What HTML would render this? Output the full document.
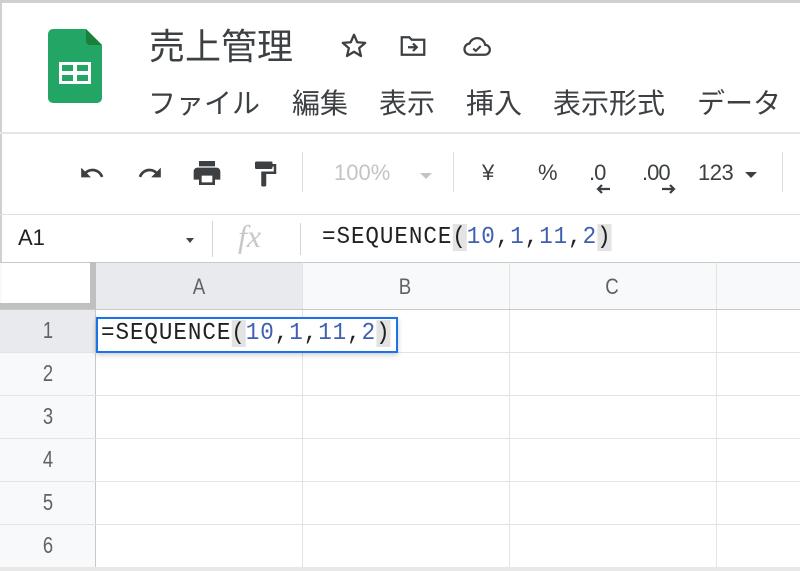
<!DOCTYPE html>
<html><head><meta charset="utf-8"><style>
*{margin:0;padding:0;box-sizing:border-box}
body{width:800px;height:571px;overflow:hidden;background:#fff;position:relative;font-family:"Liberation Sans","Noto Sans CJK JP",sans-serif;color:#3c4043}
.a{position:absolute}
.cj{font-family:"Noto Sans CJK JP",sans-serif;color:#3c4043;white-space:nowrap}
.m{position:absolute;top:82px;font-size:28px;line-height:40px;font-family:"Noto Sans CJK JP",sans-serif;color:#3c4043;white-space:nowrap}
.hl{position:absolute;height:1px;background:#e2e3e3}
.vl{position:absolute;width:1px;background:#e2e3e3}
.n{position:absolute;width:96px;text-align:center;font-size:23px;color:#5f6368;transform:scaleX(.8)}
.ch{position:absolute;top:274px;font-size:22px;color:#5f6368;text-align:center;width:206px;transform:scaleX(.85)}
.mono{font-family:"Liberation Mono",monospace;white-space:nowrap;transform-origin:0 0;transform:scaleX(.94);letter-spacing:1px}
.b{color:#3f5fb0}
.p{background:#e3e3e3}
</style></head><body>
<div class="a" style="left:0;top:0;width:800px;height:3px;background:#d0d0d0"></div>
<div class="a" style="left:0;top:0;width:2px;height:571px;background:#d0d0d0"></div>
<svg class="a" style="left:48px;top:29px" width="54" height="74" viewBox="0 0 54 74"><path d="M5 0H38L54 16V69a5 5 0 0 1-5 5H5a5 5 0 0 1-5-5V5a5 5 0 0 1 5-5z" fill="#23a566"/><path d="M38 0L54 16H42a4 4 0 0 1-4-4z" fill="#188038"/><rect x="11" y="33" width="32" height="22" fill="#fff"/><rect x="14" y="36" width="11" height="6" fill="#23a566"/><rect x="29" y="36" width="11" height="6" fill="#23a566"/><rect x="14" y="46" width="11" height="6" fill="#23a566"/><rect x="29" y="46" width="11" height="6" fill="#23a566"/></svg>
<div class="a cj" style="left:149px;top:21px;font-size:36px;line-height:46px">売上管理</div>
<svg class="a" style="left:338px;top:31px" width="32" height="30" viewBox="0 0 24 24"><path d="M12 3l2.6 6 6.4.5-4.9 4.2 1.5 6.3L12 16.6 6.4 20l1.5-6.3L3 9.5l6.4-.5z" fill="none" stroke="#3c4043" stroke-width="1.8" stroke-linejoin="round"/></svg>
<svg class="a" style="left:397px;top:31px" width="32" height="30" viewBox="0 0 24 24"><path d="M3 5h6l2 2h10v12H3z" fill="none" stroke="#3c4043" stroke-width="1.8"/><path d="M8 13h7m-3-3l3 3-3 3" fill="none" stroke="#3c4043" stroke-width="1.8"/></svg>
<svg class="a" style="left:460px;top:31px" width="34" height="30" viewBox="0 0 24 24"><path d="M7 19h11a4 4 0 0 0 .5-8A6.5 6.5 0 0 0 6 10a4.5 4.5 0 0 0 1 9z" fill="none" stroke="#3c4043" stroke-width="1.8"/><path d="M9 14l2 2 4-4" fill="none" stroke="#3c4043" stroke-width="1.6"/></svg>
<div class="m" style="left:148px">ファイル</div>
<div class="m" style="left:292px">編集</div>
<div class="m" style="left:379px">表示</div>
<div class="m" style="left:466px">挿入</div>
<div class="m" style="left:553px">表示形式</div>
<div class="m" style="left:697px">データ</div>
<div class="a" style="left:0;top:132px;width:800px;height:2px;background:#e5e5e5"></div>
<!-- toolbar -->
<svg class="a" style="left:74px;top:160px" width="36" height="26" viewBox="0 0 24 24"><path d="M12.5 8c-2.6 0-5 1-6.9 2.6L2 7v9h9l-3.6-3.6c1.4-1.2 3.2-1.9 5.1-1.9 3.5 0 6.5 2.3 7.6 5.5l2.4-.8C21 11 17.1 8 12.5 8z" fill="#3c4043"/></svg>
<svg class="a" style="left:132px;top:160px" width="36" height="26" viewBox="0 0 24 24"><path d="M18.4 10.6C16.5 9 14.1 8 11.5 8 6.9 8 3 11 1.6 15.2l2.4.8c1.1-3.2 4.1-5.5 7.6-5.5 1.9 0 3.7.7 5.1 1.9L13 16h9V7z" fill="#3c4043"/></svg>
<svg class="a" style="left:189px;top:157px" width="36" height="32" viewBox="0 0 24 24"><path d="M19 8H5c-1.7 0-3 1.3-3 3v6h4v4h12v-4h4v-6c0-1.7-1.3-3-3-3zm-3 11H8v-5h8zM18 3H6v4h12z" fill="#3c4043"/></svg>
<svg class="a" style="left:250px;top:157px" width="30" height="34" viewBox="0 0 24 24"><path d="M18 4V3c0-.6-.4-1-1-1H5c-.6 0-1 .4-1 1v4c0 .6.4 1 1 1h12c.6 0 1-.4 1-1V6h1v4H9v11c0 .6.4 1 1 1h2c.6 0 1-.4 1-1v-9h8V4z" fill="#3c4043"/></svg>
<div class="vl" style="left:302px;top:152px;height:40px;background:#ddd"></div>
<div class="a" style="left:334px;top:160px;font-size:22px;color:#c4c4c4">100%</div>
<div class="a" style="left:420px;top:173px;width:0;height:0;border-left:6px solid transparent;border-right:6px solid transparent;border-top:6px solid #c4c4c4"></div>
<div class="vl" style="left:453px;top:152px;height:40px;background:#ddd"></div>
<div class="a" style="left:482px;top:160px;font-size:22px;color:#3c4043">¥</div>
<div class="a" style="left:538px;top:160px;font-size:22px;color:#3c4043">%</div>
<div class="a" style="left:589px;top:160px;font-size:22px;color:#3c4043;letter-spacing:-1px">.0</div>
<svg class="a" style="left:596px;top:184px" width="16" height="10" viewBox="0 0 16 10"><path d="M2 5h12M6 1L2 5l4 4" fill="none" stroke="#3c4043" stroke-width="2.2"/></svg>
<div class="a" style="left:642px;top:160px;font-size:22px;color:#3c4043;letter-spacing:-1px">.00</div>
<svg class="a" style="left:660px;top:184px" width="16" height="10" viewBox="0 0 16 10"><path d="M2 5h12M10 1l4 4-4 4" fill="none" stroke="#3c4043" stroke-width="2.2"/></svg>
<div class="a" style="left:698px;top:160px;font-size:22px;color:#3c4043;letter-spacing:-.5px">123</div>
<div class="a" style="left:745px;top:172px;width:0;height:0;border-left:6px solid transparent;border-right:6px solid transparent;border-top:6px solid #3c4043"></div>
<div class="vl" style="left:782px;top:152px;height:40px;background:#ddd"></div>
<!-- formula bar -->
<div class="a" style="left:0;top:214px;width:800px;height:1px;background:#e0e0e0"></div>
<div class="a" style="left:18px;top:225px;font-size:22px;color:#202124">A1</div>
<div class="a" style="left:186px;top:238px;width:0;height:0;border-left:4px solid transparent;border-right:4px solid transparent;border-top:5px solid #444"></div>
<div class="vl" style="left:212px;top:221px;height:36px;background:#d5d5d5"></div>
<div class="a" style="left:238px;top:218px;font-size:32px;font-family:'Liberation Serif',serif;font-style:italic;color:#c8c8c8">fx</div>
<div class="vl" style="left:300px;top:223px;height:32px;background:#d5d5d5"></div>
<div class="a mono" style="left:322px;top:224px;font-size:24px;color:#202124">=SEQUENCE<span class="p">(</span><span class="b">10</span>,<span class="b">1</span>,<span class="b">11</span>,<span class="b">2</span><span class="p">)</span></div>
<!-- grid -->
<div class="a" style="left:0;top:262px;width:800px;height:48px;background:#f8f9fa"></div>
<div class="a" style="left:96px;top:262px;width:206px;height:48px;background:#e8eaed"></div>
<div class="a" style="left:0;top:310px;width:96px;height:42px;background:#e8eaed"></div>
<div class="a" style="left:0;top:352px;width:96px;height:219px;background:#f8f9fa"></div>
<div class="a" style="left:0;top:262px;width:800px;height:1px;background:#c8c8c8"></div>
<div class="a" style="left:90px;top:262px;width:6px;height:48px;background:#c0c0c0"></div>
<div class="a" style="left:0;top:303px;width:96px;height:7px;background:#c0c0c0"></div>
<div class="a" style="left:2px;top:263px;width:88px;height:40px;background:#fff"></div>
<div class="vl" style="left:302px;top:262px;height:309px"></div>
<div class="vl" style="left:509px;top:262px;height:309px"></div>
<div class="vl" style="left:716px;top:262px;height:309px"></div>
<div class="vl" style="left:95px;top:310px;height:261px;background:#c8c8c8"></div>
<div class="hl" style="left:0;top:309px;width:800px;background:#c8c8c8"></div>
<div class="hl" style="left:0;top:352px;width:800px"></div>
<div class="hl" style="left:0;top:395px;width:800px"></div>
<div class="hl" style="left:0;top:438px;width:800px"></div>
<div class="hl" style="left:0;top:481px;width:800px"></div>
<div class="hl" style="left:0;top:524px;width:800px"></div>
<div class="hl" style="left:0;top:567px;width:800px;height:4px;background:#e8e8e8"></div>
<div class="ch" style="left:96px">A</div>
<div class="ch" style="left:302px">B</div>
<div class="ch" style="left:509px">C</div>
<div class="n" style="left:0;top:317px">1</div>
<div class="n" style="left:0;top:360px">2</div>
<div class="n" style="left:0;top:403px">3</div>
<div class="n" style="left:0;top:446px">4</div>
<div class="n" style="left:0;top:489px">5</div>
<div class="n" style="left:0;top:532px">6</div>
<div class="a" style="left:96px;top:317px;width:302px;height:36px;border:2px solid #1a73e8;background:#fff;box-shadow:0 2px 5px rgba(0,0,0,.2)"></div>
<div class="a mono" style="left:101px;top:320px;font-size:24px;color:#202124">=SEQUENCE<span class="p">(</span><span class="b">10</span>,<span class="b">1</span>,<span class="b">11</span>,<span class="b">2</span><span class="p">)</span></div>
</body></html>
